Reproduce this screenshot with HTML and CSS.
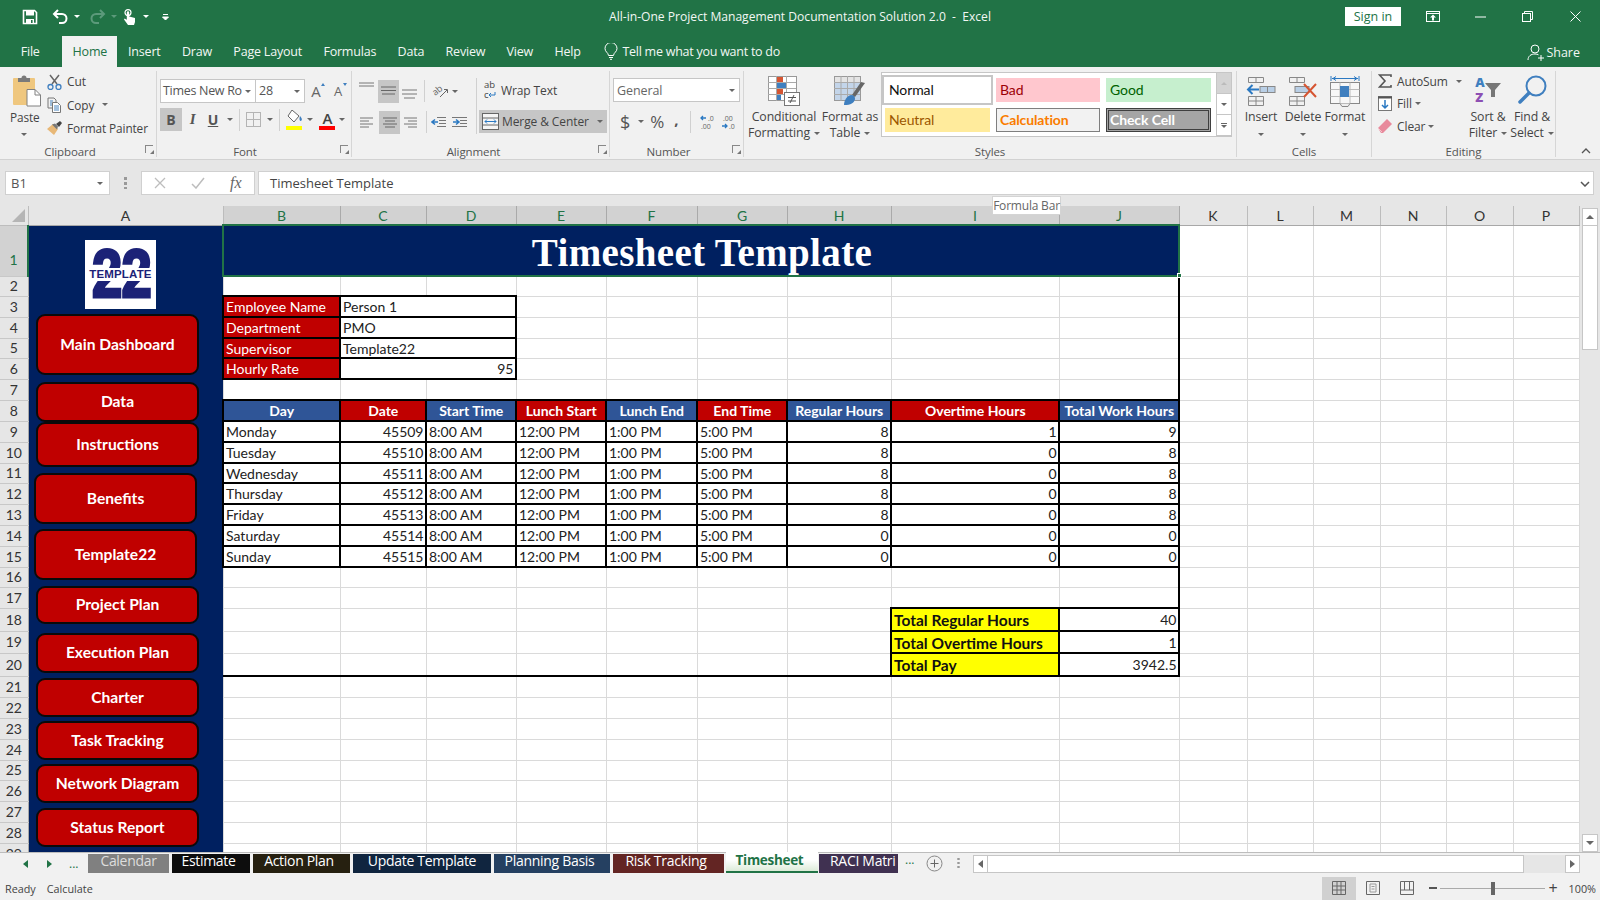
FILE: index.html
```html
<!DOCTYPE html>
<html lang="en">
<head>
<meta charset="utf-8">
<title>All-in-One Project Management Documentation Solution 2.0 - Excel</title>
<link rel="stylesheet" href="styles.css">
</head>
<body>
<div class="app">
  <header class="titlebar">
    <div class="titlerow">
      <div class="qat">
        <svg class="q-save" width="16" height="16" viewBox="0 0 16 16"><path d="M1.5 1.5h11l2 2v11h-13z" fill="none" stroke="#fff" stroke-width="1.6"/><rect x="4" y="2" width="8" height="4.5" fill="#fff"/><rect x="4" y="10" width="8" height="4.5" fill="#fff"/><rect x="9" y="11" width="1.6" height="3" fill="#217346"/></svg>
        <svg class="q-undo" width="16" height="15" viewBox="0 0 16 15"><path d="M2 5h8a4.5 4.5 0 0 1 0 9H7" fill="none" stroke="#fff" stroke-width="2"/><path d="M6 1L2 5l4 4" fill="none" stroke="#fff" stroke-width="2"/></svg>
        <i class="caret white q-c1"></i>
        <svg class="q-redo" width="16" height="15" viewBox="0 0 16 15"><path d="M14 5H6a4.5 4.5 0 0 0 0 9h3" fill="none" stroke="#5c9a7b" stroke-width="2"/><path d="M10 1l4 4-4 4" fill="none" stroke="#5c9a7b" stroke-width="2"/></svg>
        <i class="caret dim q-c2"></i>
        <svg class="q-touch" width="13" height="16" viewBox="0 0 13 16"><circle cx="5" cy="3.6" r="3" fill="none" stroke="#fff" stroke-width="1.2"/><path d="M3.8 3.5a1.2 1.2 0 0 1 2.4 0v4l5.8 1.4V13l-1 3H5L1 10.5 1.6 9.600l2.200 1.200z" fill="#fff"/></svg>
        <i class="caret white q-c3"></i>
        <svg class="q-more" width="7" height="8" viewBox="0 0 7 8"><path d="M1 1.500h5M0.500 4l3 3 3-3z" stroke="#fff" fill="#fff" stroke-width="1"/></svg>
      </div>
      <div class="doc-title">All-in-One Project Management Documentation Solution 2.0&nbsp; -&nbsp; Excel</div>
      <div class="winctl">
        <button class="signin">Sign in</button>
        <svg class="w-disp" width="14" height="11" viewBox="0 0 14 11"><rect x=".5" y=".5" width="13" height="10" fill="none" stroke="#fff"/><path d="M.5 2.500h13" stroke="#fff"/><path d="M7 3.500l3 3H8v3H6v-3H4z" fill="#fff"/></svg>
        <svg class="w-min" width="11" height="2" viewBox="0 0 11 2"><path d="M0 1h11" stroke="#fff"/></svg>
        <svg class="w-rest" width="11" height="11" viewBox="0 0 11 11"><path d="M2.500 2.500V.5h8v8h-2" fill="none" stroke="#fff"/><rect x=".5" y="2.500" width="8" height="8" fill="none" stroke="#fff"/></svg>
        <svg class="w-close" width="11" height="11" viewBox="0 0 11 11"><path d="M.5.5l10 10M10.500.5l-10 10" stroke="#fff"/></svg>
      </div>
    </div>
    <nav class="tabrow">
      <span class="rtab t-file">File</span>
      <span class="rtab active">Home</span>
      <span class="rtab">Insert</span>
      <span class="rtab">Draw</span>
      <span class="rtab">Page Layout</span>
      <span class="rtab">Formulas</span>
      <span class="rtab">Data</span>
      <span class="rtab">Review</span>
      <span class="rtab">View</span>
      <span class="rtab">Help</span>
      <span class="tellme">
        <svg width="14" height="17" viewBox="0 0 14 17"><path d="M4.500 12.500C4.300 9.500 1 9 1 5.500a6 6 0 0 1 12 0c0 3.500-3.300 4-3.500 7z" fill="none" stroke="#fff"/><path d="M5 14.500h4M6 16.300h2" stroke="#fff"/></svg>
        Tell me what you want to do
      </span>
      <span class="share">
        <svg width="18" height="17" viewBox="0 0 18 17"><circle cx="8" cy="5" r="4" fill="none" stroke="#fff"/><path d="M1 16c0-4 3-6 7-6 1.500 0 2.500.3 3.500.8" fill="none" stroke="#fff"/><path d="M14 11v6M11 14h6" stroke="#fff"/></svg>
        Share
      </span>
    </nav>
  </header>

  <section class="ribbon">
    <div class="group g-clip">
      <div class="gbody">
        <div class="paste">
          <svg width="30" height="33" viewBox="0 0 30 33"><rect x="1" y="4" width="22" height="27" rx="1" fill="#efc77f"/><path d="M6 8V4h3.500a2.500 2.500 0 0 1 5 0H18v4z" fill="#7a7a7a"/><path d="M15 15.500h8l5.500 5.500v11H15z" fill="#fff" stroke="#808080"/><path d="M23 15.500V21h5.500" fill="none" stroke="#808080"/></svg>
          <span class="lbl">Paste</span>
          <i class="caret"></i>
        </div>
        <div class="cliplist">
          <div class="cliprow">
            <svg width="15" height="16" viewBox="0 0 15 16"><path d="M3 1l7 9M12 1L5 10" stroke="#666" stroke-width="1.500" fill="none"/><circle cx="3.500" cy="13" r="2.500" fill="none" stroke="#3f7fbf" stroke-width="1.300"/><circle cx="11.500" cy="13" r="2.500" fill="none" stroke="#3f7fbf" stroke-width="1.300"/></svg>
            <span class="lbl">Cut</span>
          </div>
          <div class="cliprow">
            <svg width="15" height="16" viewBox="0 0 15 16"><path d="M1 1h6l2 2v2M1 1v10h4" fill="none" stroke="#777"/><path d="M5.500 5.500h5l3 3v7h-8z" fill="#fff" stroke="#777"/><path d="M7 9h5M7 11h5M7 13h5M3 4h3M3 6h2M3 8h2" stroke="#4a86c0"/></svg>
            <span class="lbl">Copy</span><i class="caret c-copy"></i>
          </div>
          <div class="cliprow">
            <svg width="15" height="14" viewBox="0 0 15 14"><path d="M0 8l6-5 5 5-4 6z" fill="#e8b877"/><path d="M5 3.500l3-1 3 3-1 3z" fill="#777"/><path d="M9 3l4-3 2 2-3 4z" fill="#444"/></svg>
            <span class="lbl">Format Painter</span>
          </div>
        </div>
      </div>
      <div class="glabel">Clipboard<i class="launcher"></i></div>
    </div>

    <div class="group g-font">
      <div class="gbody col">
        <div class="frow1">
          <span class="combo c-name">Times New Ro<i class="caret"></i></span>
          <span class="combo c-size">28<i class="caret"></i></span>
          <span class="growA">A<i class="tri up"></i></span>
          <span class="growA small">A<i class="tri down"></i></span>
        </div>
        <div class="frow2">
          <span class="tb sel b">B</span>
          <span class="tb i">I</span>
          <span class="tb u">U</span><i class="caret c-u"></i>
          <i class="vsep s1"></i>
          <svg class="ic-bord" width="15" height="15" viewBox="0 0 15 15"><rect x=".5" y=".5" width="14" height="14" fill="none" stroke="#b4b4b4"/><path d="M7.500 0v15M0 7.500h15" stroke="#b4b4b4"/></svg><i class="caret c-b"></i>
          <i class="vsep s2"></i>
          <span class="colorbtn f1">
            <svg width="17" height="13" viewBox="0 0 17 13"><path d="M6 0l7 6-5 6-6-6z" fill="#fff" stroke="#666"/><path d="M14 6c1.500 2 2.500 3 1.500 4.500S12.500 10 14 6z" fill="#3f7fbf"/></svg>
            <i class="bar yellow"></i>
          </span><i class="caret c-f"></i>
          <span class="colorbtn f2"><span class="bigA">A</span><i class="bar red"></i></span><i class="caret c-a"></i>
        </div>
      </div>
      <div class="glabel">Font<i class="launcher"></i></div>
    </div>

    <div class="group g-align">
      <div class="gbody">
        <div class="alcol">
          <div class="alrow r-top">
            <svg class="al a1" width="16" height="8" viewBox="0 0 16 8"><path d="M0 1h15M0 4h15" stroke="#777"/></svg>
            <span class="albtn sel"><svg width="15" height="10" viewBox="0 0 15 10"><path d="M0 1h15M0 4.500h15M1 8h13" stroke="#666"/></svg></span>
            <svg class="al a3" width="16" height="10" viewBox="0 0 16 10"><path d="M0 1h15M0 5h15M2 9h11" stroke="#777"/></svg>
            <i class="vsep s3"></i>
            <svg class="ic-orient" width="16" height="14" viewBox="0 0 16 14"><text x="1" y="10" class="ori" transform="rotate(-40 5 8)">ab</text><path d="M8 13l7-7M12 5.500h3.500V9" fill="none" stroke="#666"/></svg>
            <i class="caret c-or"></i>
          </div>
          <div class="alrow">
            <svg class="al a4" width="14" height="11" viewBox="0 0 14 11"><path d="M0 1h13M0 4h9M0 7h13M0 10h9" stroke="#777"/></svg>
            <span class="albtn sel"><svg width="14" height="11" viewBox="0 0 14 11"><path d="M0 1h14M2 4h10M0 7h14M2 10h10" stroke="#666"/></svg></span>
            <svg class="al a6" width="14" height="11" viewBox="0 0 14 11"><path d="M0 1h13M4 4h9M0 7h13M4 10h9" stroke="#777"/></svg>
            <i class="vsep s3b"></i>
            <svg class="ind1" width="15" height="12" viewBox="0 0 15 12"><path d="M6 1.500h9M8 4.500h7M8 7.500h7M6 10.500h9" stroke="#777"/><path d="M7 6H2M4 3.500L1 6l3 2.500" fill="none" stroke="#2b79c2" stroke-width="1.500"/></svg>
            <svg class="ind2" width="15" height="12" viewBox="0 0 15 12"><path d="M0 1.500h15M8 4.500h7M8 7.500h7M0 10.500h15" stroke="#777"/><path d="M1 6h5M4 3.500L7 6 4 8.500" fill="none" stroke="#2b79c2" stroke-width="1.500"/></svg>
          </div>
        </div>
        <i class="vsep tall"></i>
        <div class="mergecol">
          <div class="wrapline">
            <span class="abc"><span>ab</span><span class="abc2">c<svg width="8" height="6" viewBox="0 0 8 6"><path d="M7 0v3H1M3 1L1 3l2 2" fill="none" stroke="#2b79c2"/></svg></span></span>
            <span class="lbl">Wrap Text</span>
          </div>
          <div class="mergeline">
            <svg width="17" height="17" viewBox="0 0 17 17"><rect x=".5" y=".5" width="16" height="16" fill="#f5f5f5" stroke="#666"/><path d="M.5 5h16M.5 12h16" stroke="#666"/><path d="M3 8.500h11M5 6.500l-2 2 2 2M12 6.500l2 2-2 2" fill="none" stroke="#2b79c2"/></svg>
            <span class="lbl">Merge &amp; Center</span><i class="caret"></i>
          </div>
        </div>
      </div>
      <div class="glabel">Alignment<i class="launcher"></i></div>
    </div>

    <div class="group g-num">
      <div class="gbody col">
        <span class="combo c-gen">General<i class="caret"></i></span>
        <div class="nrow">
          <span class="sym dollar">$</span><i class="caret c-d"></i>
          <span class="sym pct">%</span>
          <span class="sym comma">,</span>
          <i class="vsep s4"></i>
          <svg class="dec1" width="14" height="16" viewBox="0 0 14 16"><path d="M6 4H1M3 2L1 4l2 2" fill="none" stroke="#2b79c2" stroke-width="1.300"/><text x="8" y="7" class="mini">.0</text><text x="1" y="15" class="mini">.00</text></svg>
          <svg class="dec2" width="14" height="16" viewBox="0 0 14 16"><text x="2" y="7" class="mini">.00</text><path d="M1 12h5M4 10l2 2-2 2" fill="none" stroke="#2b79c2" stroke-width="1.300"/><text x="8" y="15" class="mini">.0</text></svg>
        </div>
      </div>
      <div class="glabel">Number<i class="launcher"></i></div>
    </div>

    <div class="group g-styles">
      <div class="gbody">
        <div class="bigbtn b-cond">
          <svg width="32" height="30" viewBox="0 0 32 30"><rect x=".5" y=".5" width="28" height="24" fill="#fff" stroke="#999"/><path d="M8.500 0v25M18.500 0v25M0 6.500h28M0 12.500h28M0 18.500h28" stroke="#aaa"/><rect x="9" y="1" width="6" height="5" fill="#d65532"/><rect x="9" y="7" width="9" height="5" fill="#3f7fbf"/><rect x="9" y="13" width="6" height="5" fill="#d65532"/><rect x="9" y="19" width="4" height="5" fill="#3f7fbf"/><rect x="16.500" y="16.500" width="15" height="13" fill="#fff" stroke="#777"/><path d="M20 21.500h8M20 25h8M26 19l-4 8" stroke="#555"/></svg>
          <span class="lbl">Conditional</span>
          <span class="lbl">Formatting<i class="caret"></i></span>
        </div>
        <div class="bigbtn b-fmt">
          <svg width="32" height="30" viewBox="0 0 32 30"><rect x=".5" y=".5" width="26" height="24" fill="#c3d5ea" stroke="#999"/><rect x="1" y="1" width="25" height="5" fill="#e4e4e4"/><path d="M7 0v25M13.500 0v25M20 0v25M0 6.500h26M0 12.500h26M0 18.500h26" stroke="#aaa"/><path d="M31 7l-10 14-3-2 9-13z" fill="#666"/><path d="M10 29c0-5 3-9 7-10 3 0 4 2 4 4-1 4-4 6-11 6z" fill="#3f7fbf"/></svg>
          <span class="lbl">Format as</span>
          <span class="lbl">Table<i class="caret"></i></span>
        </div>
        <div class="gallery">
          <div class="cells">
            <span class="st st-normal">Normal</span>
            <span class="st st-bad">Bad</span>
            <span class="st st-good">Good</span>
            <span class="st st-neutral">Neutral</span>
            <span class="st st-calc">Calculation</span>
            <span class="st st-check">Check Cell</span>
          </div>
          <div class="galscroll">
            <span class="gs up"><i class="tri dn-up"></i></span>
            <span class="gs"><i class="caret"></i></span>
            <span class="gs last"><i class="more-line"></i><i class="caret"></i></span>
          </div>
        </div>
      </div>
      <div class="glabel">Styles</div>
    </div>

    <div class="group g-cells">
      <div class="gbody">
        <div class="bigbtn b-cell">
          <svg width="30" height="29" viewBox="0 0 30 29"><path d="M2.500.5h15v5h-15zM10 .5v5M2.500 19.500h15v9h-15zM10 19.500v9M2.500 24h15" fill="none" stroke="#888"/><rect x="14" y="9.500" width="15" height="6" fill="#b9cfe6" stroke="#888"/><path d="M21.500 9.500v6" stroke="#888"/><path d="M13 12.500H2M6.500 8L2 12.500 6.500 17" fill="none" stroke="#2b79c2" stroke-width="2"/></svg>
          <span class="lbl">Insert</span><i class="caret"></i>
        </div>
        <div class="bigbtn b-cell">
          <svg width="30" height="29" viewBox="0 0 30 29"><path d="M1.500.5h15v5h-15zM9 .5v5M1.500 19.500h15v9h-15zM9 19.500v9M1.500 24h15" fill="none" stroke="#888"/><rect x="7" y="9.500" width="14" height="6" fill="#b9cfe6" stroke="#888"/><path d="M16 7l12 13M28 7L16 20" stroke="#d65532" stroke-width="2"/></svg>
          <span class="lbl">Delete</span><i class="caret"></i>
        </div>
        <div class="bigbtn b-cell">
          <svg width="30" height="31" viewBox="0 0 30 31"><path d="M1 0v5M29 0v5" stroke="#2b79c2"/><path d="M2 2.500h26M6 .5l-3 2 3 2M24 .5l3 2-3 2" fill="none" stroke="#2b79c2"/><rect x=".5" y="6.500" width="29" height="21" fill="#f7f7f7" stroke="#888"/><path d="M10 6.500v21M20 6.500v21M.5 13.500h29M.5 20.500h29" stroke="#bbb"/><rect x="10" y="10" width="9" height="11" fill="#3f7fbf"/><path d="M10 27.500l2 3h6l2-3" fill="#eee" stroke="#888"/></svg>
          <span class="lbl">Format</span><i class="caret"></i>
        </div>
      </div>
      <div class="glabel">Cells</div>
    </div>

    <div class="group g-edit">
      <div class="gbody">
        <div class="editlist">
          <div class="editrow">
            <svg width="14" height="14" viewBox="0 0 14 14"><path d="M13 3V1H1.500L7 7l-5.500 6H13v-2" fill="none" stroke="#555" stroke-width="1.600"/></svg>
            <span class="lbl">AutoSum</span><i class="caret c-sum"></i>
          </div>
          <div class="editrow">
            <svg width="14" height="15" viewBox="0 0 14 15"><rect x=".5" y=".5" width="13" height="14" fill="#fff" stroke="#777"/><path d="M0 1.500h14" stroke="#555" stroke-width="2"/><path d="M7 4v8M4 9l3 3 3-3" fill="none" stroke="#2b79c2" stroke-width="1.500"/></svg>
            <span class="lbl">Fill</span><i class="caret c-fill"></i>
          </div>
          <div class="editrow">
            <svg width="14" height="14" viewBox="0 0 14 14"><path d="M0 9l9-9 5 5-9 9H3z" fill="#e88a9c"/><path d="M0 9l4 4" stroke="#f4c4cd"/></svg>
            <span class="lbl">Clear</span><i class="caret c-clear"></i>
          </div>
        </div>
        <div class="bigbtn b-sort">
          <span class="azicon"><span class="az"><b class="a">A</b><b class="z">Z</b></span>
          <svg width="16" height="14" viewBox="0 0 16 14"><path d="M0 0h16L10 7v7H6V7z" fill="#777"/></svg></span>
          <span class="lbl">Sort &amp;</span>
          <span class="lbl">Filter<i class="caret"></i></span>
        </div>
        <div class="bigbtn b-find">
          <svg width="29" height="29" viewBox="0 0 29 29"><circle cx="18" cy="11" r="9.500" fill="none" stroke="#3f7fbf" stroke-width="2"/><path d="M11 18L2 27" stroke="#3f7fbf" stroke-width="3.500" stroke-linecap="round"/></svg>
          <span class="lbl">Find &amp;</span>
          <span class="lbl">Select<i class="caret"></i></span>
        </div>
      </div>
      <div class="glabel">Editing</div>
    </div>
    <svg class="collapse" width="10" height="6" viewBox="0 0 10 6"><path d="M1 5l4-4 4 4" fill="none" stroke="#555" stroke-width="1.300"/></svg>
  </section>

  <div class="fbar">
    <span class="namebox">B1<i class="caret"></i></span>
    <span class="grip"></span>
    <span class="fxbox">
      <svg width="12" height="12" viewBox="0 0 12 12"><path d="M1 1l10 10M11 1L1 11" stroke="#bdbdbd" stroke-width="1.300"/></svg>
      <svg width="14" height="12" viewBox="0 0 14 12"><path d="M1 7l4 4 8-10" fill="none" stroke="#bdbdbd" stroke-width="1.500"/></svg>
      <span class="fx">fx</span>
    </span>
    <span class="finput">Timesheet Template<svg class="fexp" width="10" height="6" viewBox="0 0 10 6"><path d="M1 1l4 4 4-4" fill="none" stroke="#555" stroke-width="1.500"/></svg></span>
  </div>
  <div class="tooltip">Formula Bar</div>

  <div class="sheetarea">
    <div class="sheet">
      <table class="grid">
        <colgroup>
          <col class="w-rh"><col class="w-a"><col class="w-b"><col class="w-c"><col class="w-d"><col class="w-e"><col class="w-f"><col class="w-g"><col class="w-h"><col class="w-i"><col class="w-j"><col class="w-k"><col class="w-l"><col class="w-m"><col class="w-n"><col class="w-o"><col class="w-p">
        </colgroup>
        <tr class="h19"><th class="corner"><i class="ctri"></i></th><th class="ch">A</th><th class="ch sel">B</th><th class="ch sel">C</th><th class="ch sel">D</th><th class="ch sel">E</th><th class="ch sel">F</th><th class="ch sel">G</th><th class="ch sel">H</th><th class="ch sel">I</th><th class="ch sel">J</th><th class="ch">K</th><th class="ch">L</th><th class="ch">M</th><th class="ch">N</th><th class="ch">O</th><th class="ch">P</th></tr>
        <tr class="h51"><th class="rh sel low">1</th><td class="side" rowspan="29"></td><td class="title" colspan="9">Timesheet Template</td><td></td><td></td><td></td><td></td><td></td><td></td></tr>
        <tr class="h20"><th class="rh">2</th><td></td><td></td><td></td><td></td><td></td><td></td><td></td><td></td><td class="fr"></td><td></td><td></td><td></td><td></td><td></td><td></td></tr>
        <tr class="h21"><th class="rh">3</th><td class="k lab">Employee Name</td><td class="k" colspan="2">Person 1</td><td></td><td></td><td></td><td></td><td></td><td class="fr"></td><td></td><td></td><td></td><td></td><td></td><td></td></tr>
        <tr class="h21"><th class="rh">4</th><td class="k lab">Department</td><td class="k" colspan="2">PMO</td><td></td><td></td><td></td><td></td><td></td><td class="fr"></td><td></td><td></td><td></td><td></td><td></td><td></td></tr>
        <tr class="h20"><th class="rh">5</th><td class="k lab">Supervisor</td><td class="k" colspan="2">Template22</td><td></td><td></td><td></td><td></td><td></td><td class="fr"></td><td></td><td></td><td></td><td></td><td></td><td></td></tr>
        <tr class="h21"><th class="rh">6</th><td class="k lab">Hourly Rate</td><td class="k n" colspan="2">95</td><td></td><td></td><td></td><td></td><td></td><td class="fr"></td><td></td><td></td><td></td><td></td><td></td><td></td></tr>
        <tr class="h21"><th class="rh">7</th><td></td><td></td><td></td><td></td><td></td><td></td><td></td><td></td><td class="fr"></td><td></td><td></td><td></td><td></td><td></td><td></td></tr>
        <tr class="h21"><th class="rh">8</th><td class="k hb">Day</td><td class="k hr">Date</td><td class="k hb">Start Time</td><td class="k hr">Lunch Start</td><td class="k hb">Lunch End</td><td class="k hr">End Time</td><td class="k hb">Regular Hours</td><td class="k hr">Overtime Hours</td><td class="k hb">Total Work Hours</td><td></td><td></td><td></td><td></td><td></td><td></td></tr>
        <tr class="h21"><th class="rh">9</th><td class="k">Monday</td><td class="k n">45509</td><td class="k">8:00 AM</td><td class="k">12:00 PM</td><td class="k">1:00 PM</td><td class="k">5:00 PM</td><td class="k n">8</td><td class="k n">1</td><td class="k n">9</td><td></td><td></td><td></td><td></td><td></td><td></td></tr>
        <tr class="h21"><th class="rh">10</th><td class="k">Tuesday</td><td class="k n">45510</td><td class="k">8:00 AM</td><td class="k">12:00 PM</td><td class="k">1:00 PM</td><td class="k">5:00 PM</td><td class="k n">8</td><td class="k n">0</td><td class="k n">8</td><td></td><td></td><td></td><td></td><td></td><td></td></tr>
        <tr class="h20"><th class="rh">11</th><td class="k">Wednesday</td><td class="k n">45511</td><td class="k">8:00 AM</td><td class="k">12:00 PM</td><td class="k">1:00 PM</td><td class="k">5:00 PM</td><td class="k n">8</td><td class="k n">0</td><td class="k n">8</td><td></td><td></td><td></td><td></td><td></td><td></td></tr>
        <tr class="h21"><th class="rh">12</th><td class="k">Thursday</td><td class="k n">45512</td><td class="k">8:00 AM</td><td class="k">12:00 PM</td><td class="k">1:00 PM</td><td class="k">5:00 PM</td><td class="k n">8</td><td class="k n">0</td><td class="k n">8</td><td></td><td></td><td></td><td></td><td></td><td></td></tr>
        <tr class="h21"><th class="rh">13</th><td class="k">Friday</td><td class="k n">45513</td><td class="k">8:00 AM</td><td class="k">12:00 PM</td><td class="k">1:00 PM</td><td class="k">5:00 PM</td><td class="k n">8</td><td class="k n">0</td><td class="k n">8</td><td></td><td></td><td></td><td></td><td></td><td></td></tr>
        <tr class="h21"><th class="rh">14</th><td class="k">Saturday</td><td class="k n">45514</td><td class="k">8:00 AM</td><td class="k">12:00 PM</td><td class="k">1:00 PM</td><td class="k">5:00 PM</td><td class="k n">0</td><td class="k n">0</td><td class="k n">0</td><td></td><td></td><td></td><td></td><td></td><td></td></tr>
        <tr class="h21"><th class="rh">15</th><td class="k">Sunday</td><td class="k n">45515</td><td class="k">8:00 AM</td><td class="k">12:00 PM</td><td class="k">1:00 PM</td><td class="k">5:00 PM</td><td class="k n">0</td><td class="k n">0</td><td class="k n">0</td><td></td><td></td><td></td><td></td><td></td><td></td></tr>
        <tr class="h20"><th class="rh">16</th><td></td><td></td><td></td><td></td><td></td><td></td><td></td><td></td><td class="fr"></td><td></td><td></td><td></td><td></td><td></td><td></td></tr>
        <tr class="h21"><th class="rh">17</th><td></td><td></td><td></td><td></td><td></td><td></td><td></td><td></td><td class="fr"></td><td></td><td></td><td></td><td></td><td></td><td></td></tr>
        <tr class="h23"><th class="rh">18</th><td></td><td></td><td></td><td></td><td></td><td></td><td></td><td class="k yl">Total Regular Hours</td><td class="k n">40</td><td></td><td></td><td></td><td></td><td></td><td></td></tr>
        <tr class="h22"><th class="rh">19</th><td></td><td></td><td></td><td></td><td></td><td></td><td></td><td class="k yl">Total Overtime Hours</td><td class="k n">1</td><td></td><td></td><td></td><td></td><td></td><td></td></tr>
        <tr class="h23"><th class="rh">20</th><td class="fb"></td><td class="fb"></td><td class="fb"></td><td class="fb"></td><td class="fb"></td><td class="fb"></td><td class="fb"></td><td class="k yl">Total Pay</td><td class="k n">3942.5</td><td></td><td></td><td></td><td></td><td></td><td></td></tr>
        <tr class="h21"><th class="rh">21</th><td></td><td></td><td></td><td></td><td></td><td></td><td></td><td></td><td></td><td></td><td></td><td></td><td></td><td></td><td></td></tr>
        <tr class="h21"><th class="rh">22</th><td></td><td></td><td></td><td></td><td></td><td></td><td></td><td></td><td></td><td></td><td></td><td></td><td></td><td></td><td></td></tr>
        <tr class="h21"><th class="rh">23</th><td></td><td></td><td></td><td></td><td></td><td></td><td></td><td></td><td></td><td></td><td></td><td></td><td></td><td></td><td></td></tr>
        <tr class="h21"><th class="rh">24</th><td></td><td></td><td></td><td></td><td></td><td></td><td></td><td></td><td></td><td></td><td></td><td></td><td></td><td></td><td></td></tr>
        <tr class="h20"><th class="rh">25</th><td></td><td></td><td></td><td></td><td></td><td></td><td></td><td></td><td></td><td></td><td></td><td></td><td></td><td></td><td></td></tr>
        <tr class="h21"><th class="rh">26</th><td></td><td></td><td></td><td></td><td></td><td></td><td></td><td></td><td></td><td></td><td></td><td></td><td></td><td></td><td></td></tr>
        <tr class="h21"><th class="rh">27</th><td></td><td></td><td></td><td></td><td></td><td></td><td></td><td></td><td></td><td></td><td></td><td></td><td></td><td></td><td></td></tr>
        <tr class="h21"><th class="rh">28</th><td></td><td></td><td></td><td></td><td></td><td></td><td></td><td></td><td></td><td></td><td></td><td></td><td></td><td></td><td></td></tr>
        <tr class="h21"><th class="rh">29</th><td></td><td></td><td></td><td></td><td></td><td></td><td></td><td></td><td></td><td></td><td></td><td></td><td></td><td></td><td></td></tr>
      </table>
      <div class="logo"><span class="logo-num">22</span><span class="logo-band">TEMPLATE</span></div>
      <a class="nav n1">Main Dashboard</a>
      <a class="nav n2">Data</a>
      <a class="nav n3">Instructions</a>
      <a class="nav n4">Benefits</a>
      <a class="nav n5">Template22</a>
      <a class="nav n6">Project Plan</a>
      <a class="nav n7">Execution Plan</a>
      <a class="nav n8">Charter</a>
      <a class="nav n9">Task Tracking</a>
      <a class="nav n10">Network Diagram</a>
      <a class="nav n11">Status Report</a>
      <i class="fillhandle"></i>
    </div>
    <div class="vscroll">
      <span class="sbtn"><i class="tri up-g"></i></span>
      <span class="vthumb"></span>
      <span class="vspace"></span>
      <span class="sbtn"><i class="tri down-g"></i></span>
    </div>
  </div>

  <div class="tabsbar">
    <div class="tabnav">
      <i class="navtri l"></i><i class="navtri r"></i><span class="dots">...</span>
    </div>
    <span class="stab t1">Calendar</span>
    <span class="stab t2">Estimate</span>
    <span class="stab t3">Action Plan</span>
    <span class="stab t4">Update Template</span>
    <span class="stab t5">Planning Basis</span>
    <span class="stab t6">Risk Tracking</span>
    <span class="stab t7">Timesheet</span>
    <span class="stab t8">RACI Matri</span>
    <span class="dots d2">...</span>
    <svg class="addsheet" width="17" height="17" viewBox="0 0 17 17"><circle cx="8.500" cy="8.500" r="7.500" fill="none" stroke="#888"/><path d="M8.500 4.500v8M4.500 8.500h8" stroke="#666"/></svg>
    <span class="vgrip"></span>
    <div class="hscroll">
      <span class="hbtn"><i class="navtri g-l"></i></span>
      <span class="hthumb"></span>
      <span class="hspace"></span>
      <span class="hbtn"><i class="navtri g-r"></i></span>
    </div>
  </div>

  <footer class="status">
    <span class="s-ready">Ready</span>
    <span class="s-calc">Calculate</span>
    <span class="s-right">
      <span class="viewbtn on"><svg width="14" height="14" viewBox="0 0 14 14"><path d="M.5.5h13v13H.5zM5 .5v13M9 .5v13M.5 5h13M.5 9h13" fill="none" stroke="#666"/></svg></span>
      <span class="viewbtn"><svg width="14" height="14" viewBox="0 0 14 14"><path d="M.5.5h13v13H.5z" fill="none" stroke="#666"/><path d="M4 3h6v8H4zM5.500 5.500h3M5.500 8h3" fill="none" stroke="#999"/></svg></span>
      <span class="viewbtn"><svg width="14" height="14" viewBox="0 0 14 14"><path d="M.5.5h13v13H.5zM.5 9h13M4.500.5V9M9.500.5V9" fill="none" stroke="#666"/></svg></span>
      <span class="zminus"></span>
      <span class="zslider"><i class="zthumb"></i></span>
      <span class="zplus">+</span>
      <span class="zpct">100%</span>
    </span>
  </footer>
</div>
</body>
</html>
```
FILE: styles.css
```css
* { box-sizing: border-box; }
html, body { margin: 0; padding: 0; }
body { width: 1600px; height: 900px; overflow: hidden; font-family: "Open Sans", "Liberation Sans", sans-serif; color: #444; background: #e6e6e6; }
i { display: inline-block; font-style: normal; }
.app { position: relative; width: 1600px; height: 900px; display: flex; flex-direction: column; }

/* title bar */
.titlebar { background: #217346; color: #fff; height: 67px; flex: none; }
.titlerow { height: 33px; display: grid; grid-template-columns: 1fr auto 1fr; align-items: center; }
.qat { display: flex; align-items: center; padding-left: 22px; }
.q-undo { margin-left: 14px; }
.q-c1 { margin-left: 6px; }
.q-redo { margin-left: 10px; }
.q-c2 { margin-left: 5px; }
.q-touch { margin-left: 6px; }
.q-c3 { margin-left: 7px; }
.q-more { margin-left: 13px; }
.caret { width: 0; height: 0; border-left: 3px solid transparent; border-right: 3px solid transparent; border-top: 3px solid #666; }
.caret.white { border-top-color: #fff; }
.caret.dim { border-top-color: #5c9a7b; }
.doc-title { font-size: 12.100px; color: #f2f7f4; white-space: nowrap; }
.winctl { display: flex; align-items: center; justify-content: flex-end; padding-right: 19px; }
.signin { width: 56px; height: 19px; border: 0; padding: 0; background: #fff; color: #217346; font: 12.5px "Open Sans", sans-serif; }
.w-disp { margin-left: 25px; }
.w-min { margin-left: 35px; }
.w-rest { margin-left: 36px; }
.w-close { margin-left: 37px; }
.tabrow { height: 34px; display: flex; align-items: stretch; font-size: 12.5px; color: #f2f7f4; position: relative; }
.rtab { padding: 10px 10.700px 0; white-space: nowrap; letter-spacing: -.2px; }
.t-file { margin-left: 10px; margin-right: 12px; }
.rtab.active { width: 55px; margin-top: 3px; padding: 7px 0 0; text-align: center; background: #f1f1f1; color: #217346; }
.tellme { display: flex; align-items: flex-start; gap: 4px; padding: 10px 0 0 13px; letter-spacing: -.25px; white-space: nowrap; }
.tellme svg { margin-top: 0; }
.share { margin-left: auto; display: flex; gap: 1px; padding: 11px 20px 0 0; }

/* ribbon */
.ribbon { height: 93px; flex: none; background: #f1f1f1; border-bottom: 1px solid #d2d2d2; display: flex; font-size: 11.800px; position: relative; letter-spacing: -.1px; }
.group { height: 86px; margin-top: 4px; border-right: 1px solid #d6d6d6; display: flex; flex-direction: column; flex: none; }
.g-clip { width: 157px; }
.g-font { width: 195px; }
.g-align { width: 258px; }
.g-num { width: 134px; }
.g-styles { width: 493px; }
.g-cells { width: 135px; }
.g-edit { width: 184px; }
.gbody { height: 70px; display: flex; }
.gbody.col { flex-direction: column; }
.glabel { height: 16px; text-align: center; font-size: 11.500px; line-height: 16px; position: relative; color: #555; padding-top: 3px; }
.g-clip .glabel { padding-right: 16px; }
.g-font .glabel { padding-right: 18px; }
.g-align .glabel { padding-right: 14px; }
.g-num .glabel { padding-right: 16px; }
.launcher { position: absolute; right: 3px; top: 4px; width: 8px; height: 8px; border-left: 1px solid #888; border-top: 1px solid #888; }
.launcher::after { content: ""; position: absolute; right: -1px; bottom: -1px; width: 0; height: 0; border-left: 4px solid transparent; border-bottom: 4px solid #777; }
.lbl { white-space: nowrap; }

.paste { width: 47px; padding-left: 12px; display: flex; flex-direction: column; align-items: flex-start; padding-top: 3px; }
.paste .lbl { margin: 2px 0 0 -2px; line-height: 16px; }
.paste .caret { margin: 8px 0 0 9px; }
.cliplist { margin-top: -1px; }
.cliprow { height: 23px; display: flex; align-items: center; position: relative; }
.cliprow .lbl { margin-left: 5px; }
.cliprow:first-child .lbl { font-size: 12px; }
.c-copy { margin-left: 8px; }

.frow1 { display: flex; align-items: center; padding: 7px 0 0 3px; height: 32px; }
.combo { background: #fff; border: 1px solid #c6c6c6; height: 24px; display: flex; align-items: center; position: relative; padding-left: 3px; font-size: 12.5px; color: #555; white-space: nowrap; }
.combo .caret { position: absolute; right: 4px; top: 10px; }
.c-name { width: 95px; border-right: 0; letter-spacing: -.3px; padding-left: 2px; }
.c-size { width: 50px; }
.growA { width: 22px; font-size: 15px; text-align: center; position: relative; color: #666; line-height: 24px; }
.growA.small { font-size: 13px; }
.tri { position: absolute; width: 0; height: 0; }
.tri.up { right: 2px; top: 4px; border-left: 2.5px solid transparent; border-right: 2.5px solid transparent; border-bottom: 3px solid #3f7fbf; }
.tri.down { right: 2px; top: 4px; border-left: 2.5px solid transparent; border-right: 2.5px solid transparent; border-top: 3px solid #3f7fbf; }
.frow2 { display: flex; align-items: center; padding: 3px 0 0 3px; height: 30px; }
.tb { width: 22px; height: 23px; text-align: center; font: 15px/23px "Liberation Serif", serif; color: #555; }
.tb.sel { background: #c6c6c6; }
.tb.b { font: bold 14px/23px "Open Sans", sans-serif; }
.tb.i { width: 21px; font: italic bold 15px/23px "Liberation Serif", serif; }
.tb.u { text-decoration: underline; width: 20px; font: bold 14px/23px "Open Sans", sans-serif; }
.c-u { margin-left: 4px; }
.vsep { width: 1px; height: 22px; background: #d0d0d0; }
.s1 { margin: 0 6px 0 6px; }
.c-b { margin-left: 6px; }
.s2 { margin: 0 6px 0 6px; }
.colorbtn { width: 17px; display: flex; flex-direction: column; position: relative; align-items: center; height: 20px; }
.bar { width: 16px; height: 4px; position: absolute; bottom: 0; left: 0; }
.bar.yellow { background: #ffff00; }
.bar.red { background: #f00; }
.c-f { margin-left: 4px; }
.f2 { margin-left: 6px; }
.bigA { font: 600 15px/16px "Open Sans", sans-serif; color: #444; }
.c-a { margin-left: 3px; }

.alcol { width: 124px; padding: 8px 0 0 7px; }
.alrow { display: flex; align-items: center; height: 24px; margin-bottom: 7px; }
.albtn { width: 21px; height: 23px; display: flex; align-items: center; justify-content: center; }
.albtn.sel { background: #c6c6c6; }
.a1 { margin-right: 3px; margin-top: -10px; }
.a3 { margin: 6px 0 0 3px; }
.a4 { margin: 0 5px 0 1px; }
.a6 { margin: 0 0 0 4px; }
.s3 { margin: 0 7px 0 6px; }
.s3b { margin: 0 4px 0 8px; }
.ic-orient { margin-right: 4px; overflow: visible; }
.ori { font: 9px "Open Sans", sans-serif; fill: #666; }
.ind2 { margin-left: 6px; }
.vsep.tall { height: 56px; margin-top: 7px; }
.mergecol { padding: 7px 0 0 2px; }
.wrapline { height: 24px; display: flex; align-items: center; padding-left: 5px; margin-bottom: 8px; font-size: 12px; }
.abc { width: 15px; font: 9.500px/10px "Open Sans", sans-serif; margin-right: 2px; display: flex; flex-direction: column; }
.abc2 { display: flex; align-items: center; }
.mergeline { width: 128px; height: 23px; background: #c6c6c6; display: flex; align-items: center; padding-left: 3px; gap: 3px; font-size: 12px; position: relative; }
.mergeline .caret { position: absolute; right: 4px; top: 10px; }

.c-gen { width: 127px; margin: 7px 0 0 3px; color: #666; }
.nrow { display: flex; align-items: center; height: 23px; margin-top: 8px; padding-left: 10px; }
.sym { color: #555; font-size: 15px; }
.dollar { font-size: 18px; }
.c-d { margin-left: 8px; }
.pct { margin-left: 6px; font-size: 17px; }
.comma { margin-left: 10px; font-weight: 700; margin-top: -5px; }
.s4 { margin-left: 12px; }
.dec1 { margin-left: 9px; overflow: visible; }
.dec2 { margin-left: 7px; overflow: visible; }
.mini { font: 7px "Open Sans", sans-serif; fill: #666; }

.bigbtn { display: flex; flex-direction: column; align-items: center; flex: none; line-height: 16px; padding-top: 5px; font-size: 12.300px; }
.bigbtn > svg { margin-bottom: 3px; }
.bigbtn .caret { margin: 0 0 2px 4px; }
.b-cond { width: 76px; margin-left: 2px; }
.b-fmt { width: 56px; margin-left: 0; }
.gallery { width: 351px; height: 65px; margin: 1px 0 0 3px; background: #fff; border: 1px solid #c6c6c6; border-right: 0; display: flex; }
.cells { width: 334px; display: grid; grid-template-columns: 105px 104px 105px; column-gap: 6px; row-gap: 6px; padding: 5px 0 0 3px; grid-template-rows: 24px 24px; }
.st { display: flex; align-items: center; padding: 0 0 2px 4px; font: 14px "Lato", sans-serif; white-space: nowrap; }
.st-normal { background: #fff; color: #111; outline: 2px solid #c6c6c6; outline-offset: 1px; }
.st-bad { background: #ffc7ce; color: #9c0006; }
.st-good { background: #c6efce; color: #006100; }
.st-neutral { background: #ffeb9c; color: #9c5700; }
.st-calc { background: #f2f2f2; border: 1px solid #7f7f7f; color: #fa7d00; font-weight: 700; padding-left: 3px; }
.st-check { background: #a5a5a5; border: 3px double #3f3f3f; color: #fff; font-weight: 700; padding-left: 1px; }
.galscroll { width: 16px; display: flex; flex-direction: column; }
.gs { flex: 1; background: #fff; border: 1px solid #c6c6c6; border-top: 0; display: flex; flex-direction: column; gap: 1px; align-items: center; justify-content: center; position: relative; }
.gs.up { background: #d4d4d4; }
.dn-up { position: static; border-left: 3px solid transparent; border-right: 3px solid transparent; border-bottom: 3px solid #bbb; }
.more-line { width: 6px; height: 1px; background: #666; }
.b-cell { width: 42px; }
.b-cell:first-child { margin-left: 3px; }
.b-cell > svg { height: 31px; margin-bottom: 2px; }
.b-cell .caret { margin: 8px 0 0; }
.editlist { width: 100px; margin-top: -1px; padding: 0 0 0 6px; }
.editrow { height: 22.500px; display: flex; align-items: center; font-size: 12px; }
.editrow .lbl { margin-left: 5px; }
.c-sum { margin-left: 8px; }
.c-fill { margin-left: 3px; }
.c-clear { margin-left: 3px; }
.b-sort { width: 40px; margin-left: 1px; padding-top: 4px; }
.b-find { width: 46px; padding-top: 4px; margin-left: 1px; }
.b-find > svg { margin-bottom: 5px; }
.azicon { display: flex; align-items: center; height: 30px; margin-bottom: 4px; }
.az { display: flex; flex-direction: column; font: bold 13px/15px "Open Sans", sans-serif; }
.az .a { color: #3f7fbf; }
.az .z { color: #8d4fb3; }
.collapse { position: absolute; left: 1581px; top: 81px; }

/* formula bar */
.fbar { height: 46px; flex: none; background: #e6e6e6; display: flex; align-items: flex-start; padding: 11px 0 0 5px; font-size: 13px; }
.namebox { width: 105px; height: 24px; background: #fff; border: 1px solid #d0d0d0; display: flex; align-items: center; padding-left: 5px; position: relative; color: #555; }
.namebox .caret { position: absolute; right: 6px; top: 10px; }
.grip { width: 31px; height: 12px; margin-top: 6px; background: radial-gradient(circle at 50% 1.500px, #999 1.500px, transparent 1.800px) 0 0 / 100% 5px; }
.fxbox { width: 114px; height: 24px; background: #fff; border: 1px solid #d0d0d0; display: flex; align-items: center; padding-left: 12px; gap: 25px; }
.fx { font: italic 16px "Liberation Serif", serif; color: #666; }
.finput { margin-left: 3px; width: 1336px; height: 24px; background: #fff; border: 1px solid #d0d0d0; display: flex; align-items: center; padding-left: 11px; color: #444; position: relative; }
.fexp { position: absolute; right: 3px; top: 9px; }
.tooltip { position: absolute; left: 992px; top: 196px; width: 69px; height: 19px; background: #fff; border: 1px solid #d4d4d4; color: #666; font-size: 12px; line-height: 17px; text-align: center; white-space: nowrap; z-index: 4; letter-spacing: -.2px; }

/* sheet */
.sheetarea { height: 646px; flex: none; display: flex; background: #e6e6e6; }
.sheet { width: 1580px; height: 646px; overflow: hidden; position: relative; background: #e6e6e6; }
.grid { border-collapse: collapse; table-layout: fixed; width: 1579px; font: 14px "Lato", sans-serif; color: #222; background: #fff; }
.w-rh { width: 28px; } .w-a { width: 195px; } .w-b { width: 117px; } .w-c { width: 86px; } .w-d { width: 90px; } .w-e { width: 90px; } .w-f { width: 91px; } .w-g { width: 90px; } .w-h { width: 104px; } .w-i { width: 168px; } .w-j { width: 120px; } .w-k { width: 68px; } .w-l { width: 66px; } .w-m { width: 67px; } .w-n { width: 66px; } .w-o { width: 67px; } .w-p { width: 66px; }
.h19 { height: 19px; } .h20 { height: 20px; } .h21 { height: 21px; } .h22 { height: 22px; } .h23 { height: 23px; } .h51 { height: 51px; }
.grid td { border: 1px solid #dadada; padding: 0 1.500px 0 2px; white-space: nowrap; line-height: 16px; }
.h20 td, .h22 td, .h23 td { padding-top: 1px; }
.grid th { font-weight: 400; padding: 0; background: #e6e6e6; color: #333; font-size: 14px; line-height: 16px; }
.grid th.ch { padding-top: 1px; }
.corner { position: relative; border-right: 1px solid #bdbdbd; border-bottom: 1px solid #bdbdbd; }
.ctri { position: absolute; right: 3px; bottom: 3px; width: 0; height: 0; border-left: 13px solid transparent; border-bottom: 13px solid #b5b5b5; }
.ch { border-right: 1px solid #bcbcbc; border-bottom: 1px solid #a8a8a8; }
.grid .ch.sel { background: #d2d2d2; color: #217346; border-bottom: 2px solid #217346; border-right-color: #aaa; }
.rh { border-bottom: 1px solid #c8c8c8; border-right: 1px solid #a8a8a8; }
.grid .rh.sel { background: #d2d2d2; color: #217346; border-right: 2px solid #217346; }
.grid .rh.low { vertical-align: bottom; padding-bottom: 8px; }
.grid td.side { background: #002060; border: 0; }
.grid td.title { background: #002060; border: 2px solid #217346; color: #fff; text-align: center; vertical-align: bottom; padding: 0 0 0 2px; font: bold 39px/44px "Liberation Serif", serif; letter-spacing: .35px; }
.grid td.k { border: 2px solid #000; }
.grid td.n { text-align: right; }
.grid td.fr { border-right: 2px solid #000; }
.grid td.fb { border-bottom: 2px solid #000; }
.grid td.lab { background: #c00000; color: #fff; }
.grid td.hb { background: #2f5597; color: #fff; font-weight: 700; text-align: center; }
.grid td.hr { background: #c00000; color: #fff; font-weight: 700; text-align: center; }
.grid td.yl { background: #ffff00; color: #111; font-weight: 700; font-size: 15.500px; }
.fillhandle { position: absolute; left: 1177px; top: 67px; width: 5px; height: 5px; background: #217346; border: 1px solid #fff; }

.logo { position: absolute; left: 85px; top: 34px; width: 71px; height: 69px; background: #fff; text-align: center; }
.logo-num { display: block; font: 900 68px/67px "Liberation Sans", sans-serif; color: #1c2277; letter-spacing: -1px; -webkit-text-stroke: 3px #1c2277; transform: scaleX(.8); transform-origin: 50% 50%; white-space: nowrap; }
.logo-band { position: absolute; left: 2px; right: 2px; top: 28px; height: 13px; background: #fff; font: 900 11.500px/13px "Liberation Sans", sans-serif; color: #1c2277; letter-spacing: .15px; text-align: center; }

.nav { position: absolute; left: 36px; width: 163px; padding-bottom: 2px; border: 2px solid #0a0a0a; border-radius: 9px; background: #c00000; color: #fff; font: 700 15.600px "Lato", sans-serif; display: flex; align-items: center; justify-content: center; }
.n1 { top: 108px; height: 61px; }
.n2 { top: 176px; height: 40px; }
.n3 { top: 216px; height: 45px; }
.n4 { top: 267px; height: 51px; left: 34px; }
.n5 { top: 323px; height: 51px; left: 34px; }
.n6 { top: 380px; height: 38px; }
.n7 { top: 427px; height: 40px; }
.n8 { top: 472px; height: 39px; }
.n9 { top: 515px; height: 39px; }
.n10 { top: 558px; height: 39px; }
.n11 { top: 602px; height: 39px; }

.vscroll { width: 20px; display: flex; flex-direction: column; align-items: center; padding: 2px 0 0; }
.sbtn { width: 16px; height: 18px; background: #fff; border: 1px solid #c6c6c6; position: relative; flex: none; }
.tri.up-g { left: 3px; top: 6px; border-left: 4px solid transparent; border-right: 4px solid transparent; border-bottom: 4px solid #666; }
.tri.down-g { left: 3px; top: 6px; border-left: 4px solid transparent; border-right: 4px solid transparent; border-top: 4px solid #666; }
.vthumb { width: 16px; height: 124px; background: #fff; border: 1px solid #c6c6c6; border-top: 0; flex: none; }
.vspace { flex: 1; }

/* sheet tabs */
.tabsbar { height: 25px; flex: none; background: #f1f1f1; border-top: 1px solid #bdbdbd; display: flex; align-items: flex-start; font-size: 14px; position: relative; }
.tabnav { width: 88px; height: 22px; display: flex; align-items: center; padding-left: 23px; }
.navtri { width: 0; height: 0; border-top: 4px solid transparent; border-bottom: 4px solid transparent; }
.navtri.l { border-right: 5px solid #217346; }
.navtri.r { border-left: 5px solid #217346; margin-left: 19px; }
.dots { color: #217346; font-size: 12px; line-height: 14px; margin-left: 17px; }
.navtri.g-l { border-right: 5px solid #666; }
.navtri.g-r { border-left: 5px solid #666; }
.stab { height: 19px; margin-top: 1px; margin-right: 3px; flex: none; text-align: center; padding-right: 5px; color: #fff; line-height: 13px; white-space: nowrap; letter-spacing: -.3px; }
.t1 { width: 81px; background: #808080; color: #ddd; padding-right: 0; }
.t2 { width: 78px; background: #0d0d0d; }
.t3 { width: 97px; background: #262010; }
.t4 { width: 138px; background: #10253f; padding-right: 0; }
.t5 { width: 116px; background: #254061; }
.t6 { width: 111px; background: #632523; margin-right: 2px; }
.t7 { width: 92px; height: 21px; margin-top: -1px; margin-right: 1px; background: linear-gradient(#fff 40%, #dcebd8); color: #217346; font-weight: 700; font-size: 13.500px; border-bottom: 2px solid #217346; line-height: 17px; }
.t8 { width: 79px; background: #403151; text-align: left; padding: 0 0 0 11px; }
.d2 { margin-left: 4px; }
.addsheet { margin: 2px 0 0 12px; }
.vgrip { width: 3px; height: 12px; margin: 5px 0 0 14px; background: radial-gradient(circle at 50% 1px, #999 1px, transparent 1.400px) 0 0 / 100% 4px; }
.hscroll { position: absolute; left: 973px; top: 2px; width: 607px; height: 18px; display: flex; background: #e6e6e6; }
.hbtn { width: 15px; height: 18px; background: #fff; border: 1px solid #c6c6c6; flex: none; display: flex; align-items: center; justify-content: center; }
.hthumb { width: 536px; background: #fff; border: 1px solid #c6c6c6; border-left: 0; flex: none; }
.hspace { flex: 1; }

/* status */
.status { height: 23px; flex: none; background: #f1f1f1; display: flex; align-items: center; padding-bottom: 1px; font-size: 10.800px; color: #444; padding-left: 5px; }
.s-calc { margin-left: 11px; }
.s-right { margin-left: auto; display: flex; align-items: center; height: 23px; }
.viewbtn { width: 34px; height: 23px; display: flex; align-items: center; justify-content: center; }
.viewbtn.on { background: #d0d0d0; }
.zminus { width: 8px; height: 2px; background: #555; margin-left: 5px; }
.zslider { width: 105px; height: 1px; background: #aaa; margin-left: 3px; position: relative; }
.zthumb { position: absolute; left: 51px; top: -6px; width: 4px; height: 13px; background: #666; }
.zplus { margin-left: 3px; font-size: 16px; color: #444; line-height: 16px; }
.zpct { margin: 0 4px 0 11px; }
```
